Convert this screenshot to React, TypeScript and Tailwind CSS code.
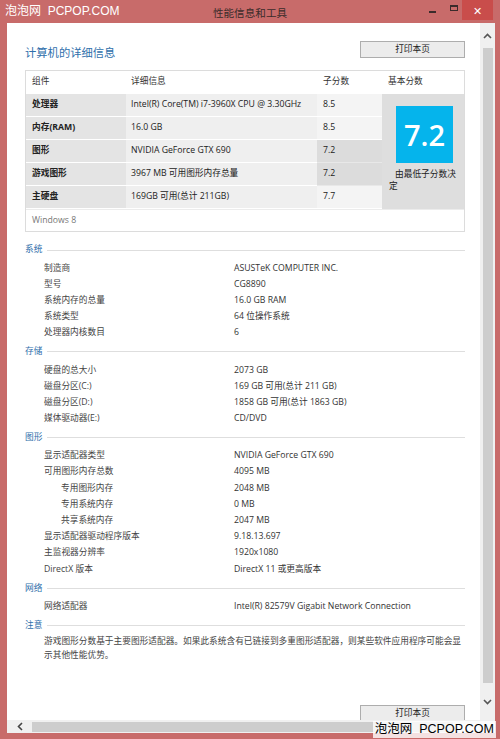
import React from "react";

const scoreRows = [
  { name: "处理器", info: "Intel(R) Core(TM) i7-3960X CPU @ 3.30GHz", score: "8.5", low: false },
  { name: "内存(RAM)", info: "16.0 GB", score: "8.5", low: false },
  { name: "图形", info: "NVIDIA GeForce GTX 690", score: "7.2", low: true },
  { name: "游戏图形", info: "3967 MB 可用图形内存总量", score: "7.2", low: true },
  { name: "主硬盘", info: "169GB 可用(总计 211GB)", score: "7.7", low: false },
];

type Row = { label: string; value: string; indent?: boolean };

const sections: { title: string; rows: Row[] }[] = [
  {
    title: "系统",
    rows: [
      { label: "制造商", value: "ASUSTeK COMPUTER INC." },
      { label: "型号", value: "CG8890" },
      { label: "系统内存的总量", value: "16.0 GB RAM" },
      { label: "系统类型", value: "64 位操作系统" },
      { label: "处理器内核数目", value: "6" },
    ],
  },
  {
    title: "存储",
    rows: [
      { label: "硬盘的总大小", value: "2073 GB" },
      { label: "磁盘分区(C:)", value: "169 GB 可用(总计 211 GB)" },
      { label: "磁盘分区(D:)", value: "1858 GB 可用(总计 1863 GB)" },
      { label: "媒体驱动器(E:)", value: "CD/DVD" },
    ],
  },
  {
    title: "图形",
    rows: [
      { label: "显示适配器类型", value: "NVIDIA GeForce GTX 690" },
      { label: "可用图形内存总数", value: "4095 MB" },
      { label: "专用图形内存", value: "2048 MB", indent: true },
      { label: "专用系统内存", value: "0 MB", indent: true },
      { label: "共享系统内存", value: "2047 MB", indent: true },
      { label: "显示适配器驱动程序版本", value: "9.18.13.697" },
      { label: "主监视器分辨率", value: "1920x1080" },
      { label: "DirectX 版本", value: "DirectX 11 或更高版本" },
    ],
  },
  {
    title: "网络",
    rows: [{ label: "网络适配器", value: "Intel(R) 82579V Gigabit Network Connection" }],
  },
];

function SectionHead({ title }: { title: string }) {
  return (
    <div className="flex items-center h-[16px] gap-[5px]">
      <span className="text-[#2f6fab]">{title}</span>
      <div className="flex-1 h-px bg-[#dedede]" />
    </div>
  );
}

function PrintButton() {
  return (
    <div className="w-[105px] h-[17px] bg-[#ececec] border border-[#adadad] flex items-center justify-center text-[#222] shrink-0">
      打印本页
    </div>
  );
}

export default function App() {
  return (
    <div className="w-[500px] h-[739px] bg-[#c86b6a] flex flex-col overflow-hidden relative font-['Open_Sans','Noto_Sans_CJK_SC',sans-serif] text-[8.7px] text-[#333]">
      {/* title bar */}
      <div className="h-[23px] grid grid-cols-[1fr_auto_1fr] shrink-0">
        <div className="pl-[5px] pt-[3px] text-white text-[12px] leading-[16px] font-['Liberation_Sans','Noto_Sans_CJK_SC',sans-serif] whitespace-nowrap">
          泡泡网&nbsp;&nbsp;PCPOP.COM
        </div>
        <div className="pt-[5px] text-[10.6px] text-[#3b2b2b] font-['Noto_Sans_CJK_SC',sans-serif]">性能信息和工具</div>
        <div className="flex justify-end items-start pr-[7px]">
          <div className="w-[7px] h-[2px] bg-[#3b2b2b] mt-[11px] mr-[14px]" />
          <div className="w-[8px] h-[6px] border border-[#3b2b2b] border-t-2 mt-[5px] mr-[4px]" />
          <div className="w-[31px] h-[20px] bg-[#c94d4b] flex items-center justify-center text-white text-[11px] leading-none">
            ✕
          </div>
        </div>
      </div>

      {/* window body */}
      <div className="flex-1 flex flex-col ml-[7px] mr-[5px] mb-[6px] bg-white overflow-hidden">
        <div className="flex-1 flex min-h-0">
          <div className="flex-1 flex flex-col pl-[18px] pr-[15px] min-w-0 overflow-hidden">
            <div className="flex items-end justify-between mt-[18px] h-[17px]">
              <span className="text-[11.3px] text-[#2f6fab] leading-[11px] font-['Noto_Sans_CJK_SC',sans-serif]">计算机的详细信息</span>
              <PrintButton />
            </div>

            {/* score table */}
            <div className="mt-[12px] border border-[#dcdcdc]">
              <div className="grid grid-cols-[100px_191px_65px_82px] h-[22px] items-center text-[#333]">
                <span className="pl-[6px]">组件</span>
                <span className="pl-[5px]">详细信息</span>
                <span className="pl-[6px]">子分数</span>
                <span className="pl-[6px]">基本分数</span>
              </div>
              <div className="grid grid-cols-[100px_191px_65px_82px] grid-rows-[repeat(5,23px)] pt-[1px]">
                {scoreRows.map((r, i) => (
                  <React.Fragment key={r.name}>
                    <div
                      className="bg-[#e4e4e4] border-b border-white pl-[6px] flex items-center font-bold text-[#222]"
                      style={{ gridRow: i + 1, gridColumn: 1 }}
                    >
                      {r.name}
                    </div>
                    <div
                      className="bg-[#efefef] border-b border-white pl-[5px] flex items-center text-[#222]"
                      style={{ gridRow: i + 1, gridColumn: 2 }}
                    >
                      {r.info}
                    </div>
                    <div
                      className={`${r.low ? "bg-[#dcdcdc] border-[#e8e8e8]" : "bg-[#f4f4f4] border-white"} border-b pl-[6px] flex items-center text-[#222]`}
                      style={{ gridRow: i + 1, gridColumn: 3 }}
                    >
                      {r.score}
                    </div>
                  </React.Fragment>
                ))}
                <div className="col-start-4 row-start-1 row-span-5 bg-[#dedede] flex flex-col">
                  <div className="ml-[14px] mt-[12px] w-[57px] h-[57px] bg-[#05b4ec] flex items-center justify-center text-white text-[29px] font-semibold font-['Open_Sans',sans-serif] leading-none">
                    7.2
                  </div>
                  <div className="pl-[7px] pr-[2px] mt-[5px] leading-[12px] indent-[6px] text-[#222]">
                    由最低子分数决定
                  </div>
                </div>
              </div>
              <div className="h-[22px] flex items-center pl-[6px] text-[#777] border-t border-[#ececec]">
                Windows 8
              </div>
            </div>

            {/* detail sections */}
            <div className="mt-[10px]">
              {sections.map((s, si) => (
                <div key={s.title} className={si === 0 ? "" : "mt-[3px]"}>
                  <SectionHead title={s.title} />
                  <div className="mt-[2px]">
                    {s.rows.map((r) => (
                      <div key={r.label} className="flex h-[16.2px] items-center whitespace-nowrap">
                        <div className={`w-[209px] ${r.indent ? "pl-[36px]" : "pl-[19px]"} text-[#444]`}>{r.label}</div>
                        <div className="text-[#333]">{r.value}</div>
                      </div>
                    ))}
                  </div>
                </div>
              ))}
              <div className="mt-[3px]">
                <SectionHead title="注意" />
                <div className="pl-[19px] mt-[1px] w-[440px] leading-[14px] text-[#444]">
                  游戏图形分数基于主要图形适配器。如果此系统含有已链接到多重图形适配器，则某些软件应用程序可能会显示其他性能优势。
                </div>
              </div>
            </div>

            <div className="flex-1" />
            <div className="h-[15px] overflow-hidden flex justify-end shrink-0">
              <PrintButton />
            </div>
          </div>

          {/* vertical scrollbar */}
          <div className="w-[15px] bg-[#f0f0f0] flex flex-col items-center shrink-0">
            <div className="h-[25px] flex items-center justify-center">
              <svg width="9" height="6" viewBox="0 0 9 6">
                <path d="M1 5 L4.5 1.5 L8 5" stroke="#555" strokeWidth="1.6" fill="none" />
              </svg>
            </div>
            <div className="w-[10px] h-[635px] bg-[#cdcdcd]" />
            <div className="flex-1 flex items-center justify-center">
              <svg width="9" height="6" viewBox="0 0 9 6">
                <path d="M1 1 L4.5 4.5 L8 1" stroke="#555" strokeWidth="1.6" fill="none" />
              </svg>
            </div>
          </div>
        </div>

        {/* horizontal scrollbar */}
        <div className="h-[13px] bg-[#f0f0f0] flex items-center shrink-0">
          <div className="w-[25px] flex items-center justify-center">
            <svg width="6" height="9" viewBox="0 0 6 9">
              <path d="M5 1 L1.5 4.5 L5 8" stroke="#444" strokeWidth="1.6" fill="none" />
            </svg>
          </div>
          <div className="w-[421px] h-[10px] bg-[#cdcdcd]" />
        </div>
      </div>

      {/* bottom watermark */}
      <div className="absolute right-[4px] bottom-[1px] px-[2px] bg-white/80 text-black text-[12.5px] leading-[17px] font-['Liberation_Sans','Noto_Sans_CJK_SC',sans-serif] whitespace-nowrap">
        泡泡网&nbsp;&nbsp;PCPOP.COM
      </div>
    </div>
  );
}
